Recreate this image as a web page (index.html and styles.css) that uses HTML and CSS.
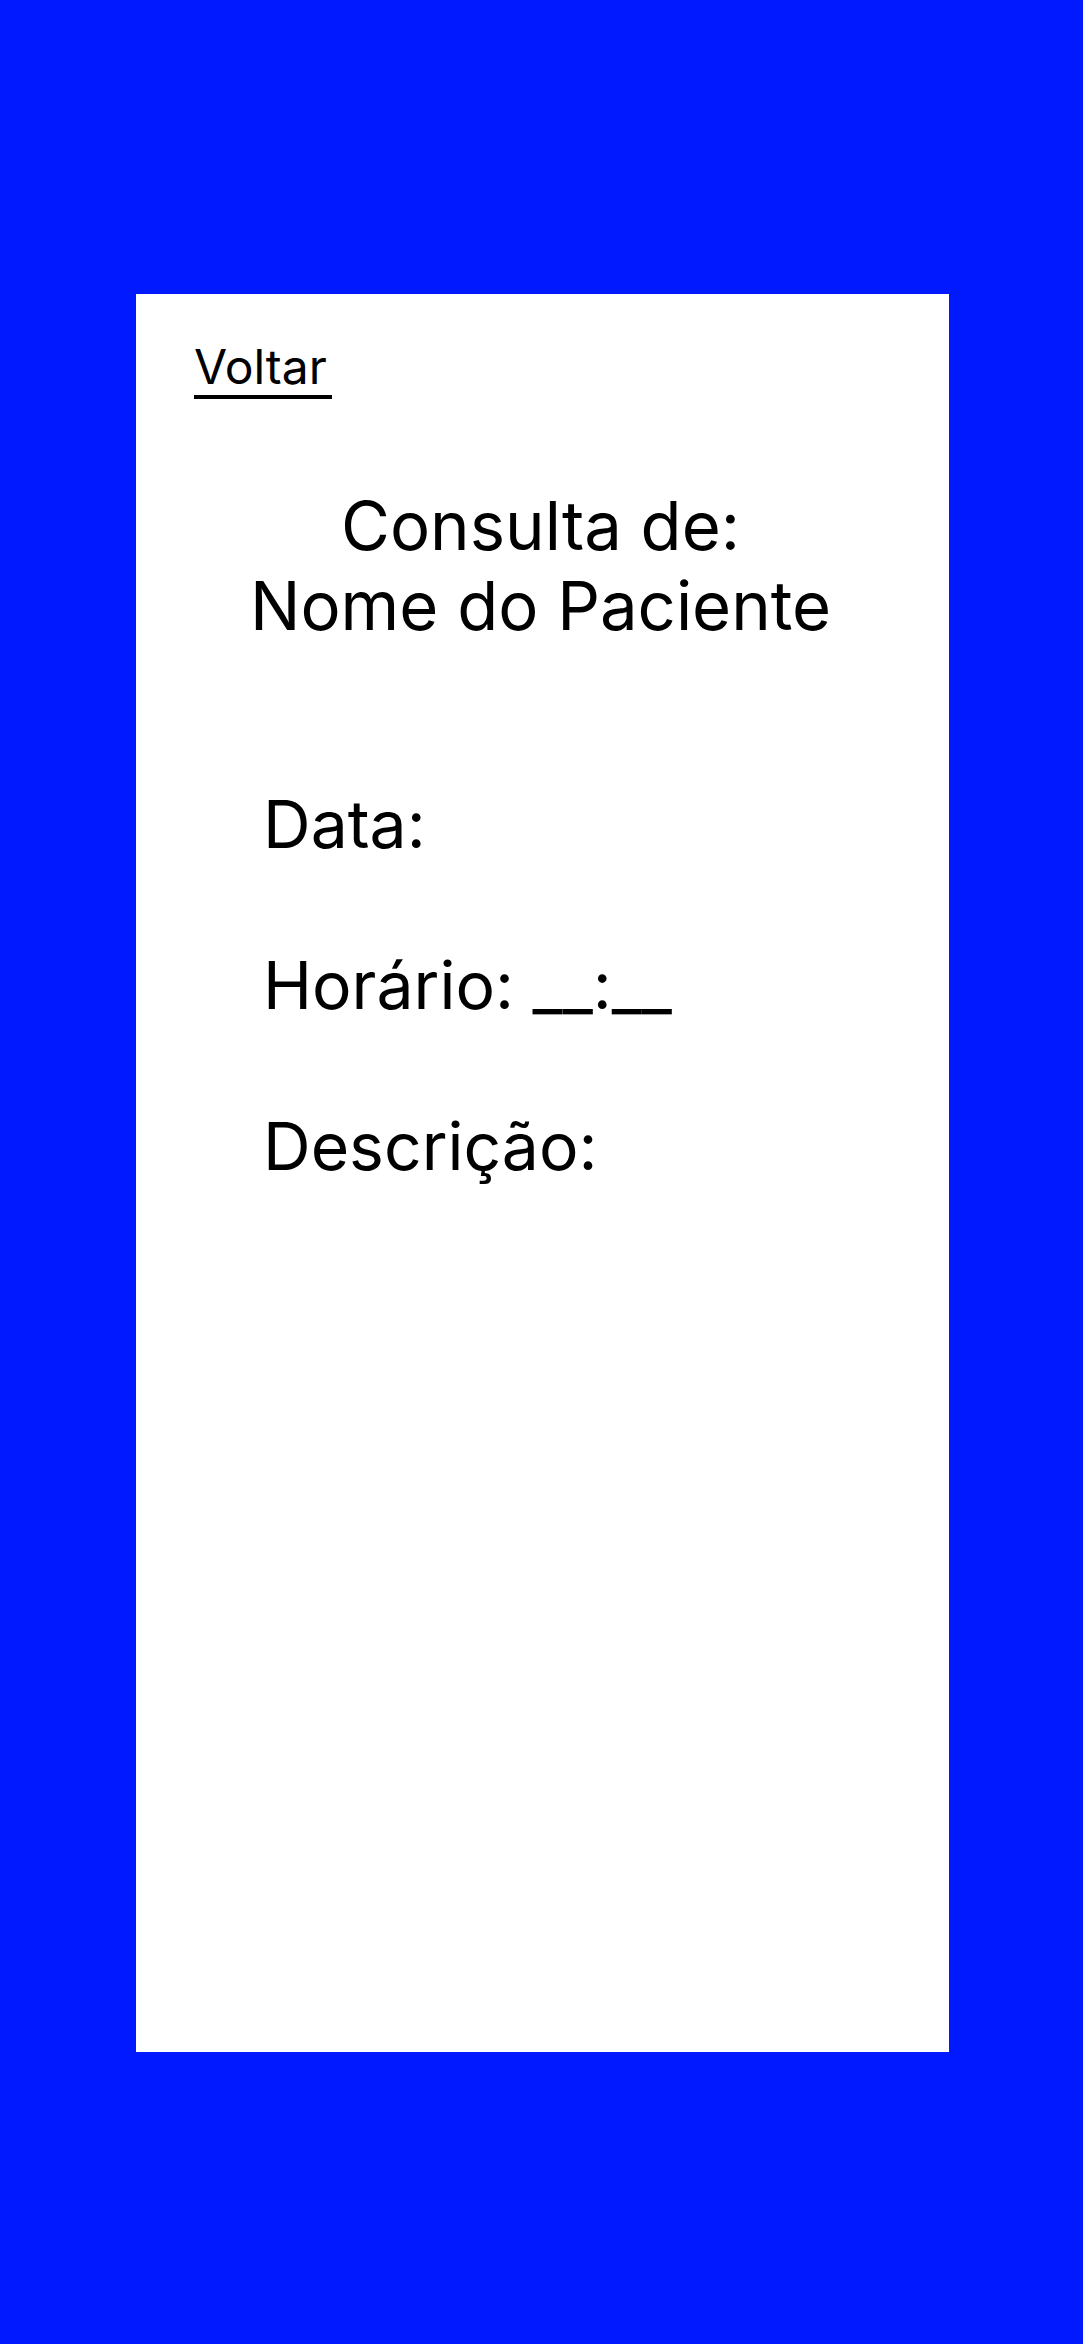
FILE: index.html
```html
<!DOCTYPE html>
<html lang="pt">
<head>
<meta charset="utf-8">
<link rel="stylesheet" href="styles.css">
</head>
<body>
<main class="card">
  <a class="back" href="#">Voltar</a>
  <h1 class="title">Consulta de:<br>Nome do Paciente</h1>
  <section class="fields">
    <p class="field">Data:</p>
    <p class="field">Horário: __:__</p>
    <p class="field">Descrição:</p>
  </section>
</main>
</body>
</html>
```
FILE: styles.css
```css
html, body {
  margin: 0;
  padding: 0;
}
body {
  background: #0019ff;
  min-height: 2344px;
  padding: 294px 134px 0 136px;
  box-sizing: border-box;
  font-family: Inter, "Noto Sans", sans-serif;
  color: #000;
}
.card {
  background: #fff;
  height: 1758px;
  box-sizing: border-box;
  padding: 44px 58px 0 58px;
  display: flex;
  flex-direction: column;
  align-items: flex-start;
}
.back {
  display: inline-block;
  font-size: 48px;
  line-height: 57px;
  padding-right: 5px;
  color: #000;
  text-decoration: none;
  border-bottom: 4px solid #000;
}
.title {
  align-self: stretch;
  margin: 87px 4px 0 0;
  font-size: 67px;
  font-weight: 400;
  line-height: 80px;
  text-align: center;
}
.fields {
  margin: 138px 0 0 69px;
}
.field {
  margin: 0 0 81px;
  font-size: 66px;
  line-height: 80px;
}
```
